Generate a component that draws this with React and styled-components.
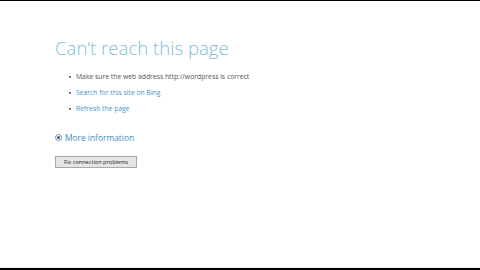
import React from 'react'
import styled, { createGlobalStyle } from 'styled-components'

const Global = createGlobalStyle`
  html, body { margin: 0; padding: 0; background: #fff; }
  body { width: 480px; height: 270px; overflow: hidden; font-family: 'Open Sans', 'Liberation Sans', sans-serif; }
`

const Frame = styled.div`
  width: 480px;
  height: 270px;
  box-sizing: border-box;
  border-top: 1px solid #000;
  display: flex;
  flex-direction: column;
`

const Page = styled.main`
  flex: 1;
  padding: 35px 0 0 55px;
`

const Footer = styled.div`
  height: 2px;
  border-top: 1px solid #ececec;
  background: #000;
`

const Title = styled.h1`
  margin: 0;
  font-size: 18.6px;
  font-weight: 300;
  line-height: 24px;
  color: #7cc0dc;
`

const List = styled.ul`
  list-style: none;
  margin: 9px 0 0 0;
  padding: 0 0 0 14px;
`

const Item = styled.li`
  position: relative;
  padding-left: 7px;
  font-size: 6.8px;
  line-height: 16px;
  color: ${p => (p.link ? '#4a95c9' : '#555')};

  &::before {
    content: '';
    position: absolute;
    left: 0;
    top: 7px;
    width: 2px;
    height: 2px;
    border-radius: 50%;
    background: #444;
  }
`

const More = styled.div`
  display: flex;
  align-items: center;
  gap: 3px;
  margin-top: 15px;
  font-size: 8.4px;
  color: #3f8fc6;
`

const Radio = styled.span`
  width: 7px;
  height: 7px;
  box-sizing: border-box;
  border: 1px solid #6b8fae;
  border-radius: 50%;
  display: flex;
  align-items: center;
  justify-content: center;
  &::after {
    content: '';
    width: 3px;
    height: 3px;
    border-radius: 50%;
    background: #345a80;
  }
`

const Button = styled.button`
  display: block;
  margin-top: 13px;
  width: 82px;
  height: 12px;
  padding: 0;
  border: 1px solid #a9a9a9;
  background: #e5e5e5;
  font-family: inherit;
  font-size: 5.6px;
  color: #222;
`

export default function App() {
  return (
    <>
      <Global />
      <Frame>
        <Page>
          <Title>Can’t reach this page</Title>
          <List>
            <Item>Make sure the web address http://wordpress is correct</Item>
            <Item link>Search for this site on Bing</Item>
            <Item link>Refresh the page</Item>
          </List>
          <More>
            <Radio />
            More information
          </More>
          <Button>Fix connection problems</Button>
        </Page>
        <Footer />
      </Frame>
    </>
  )
}
